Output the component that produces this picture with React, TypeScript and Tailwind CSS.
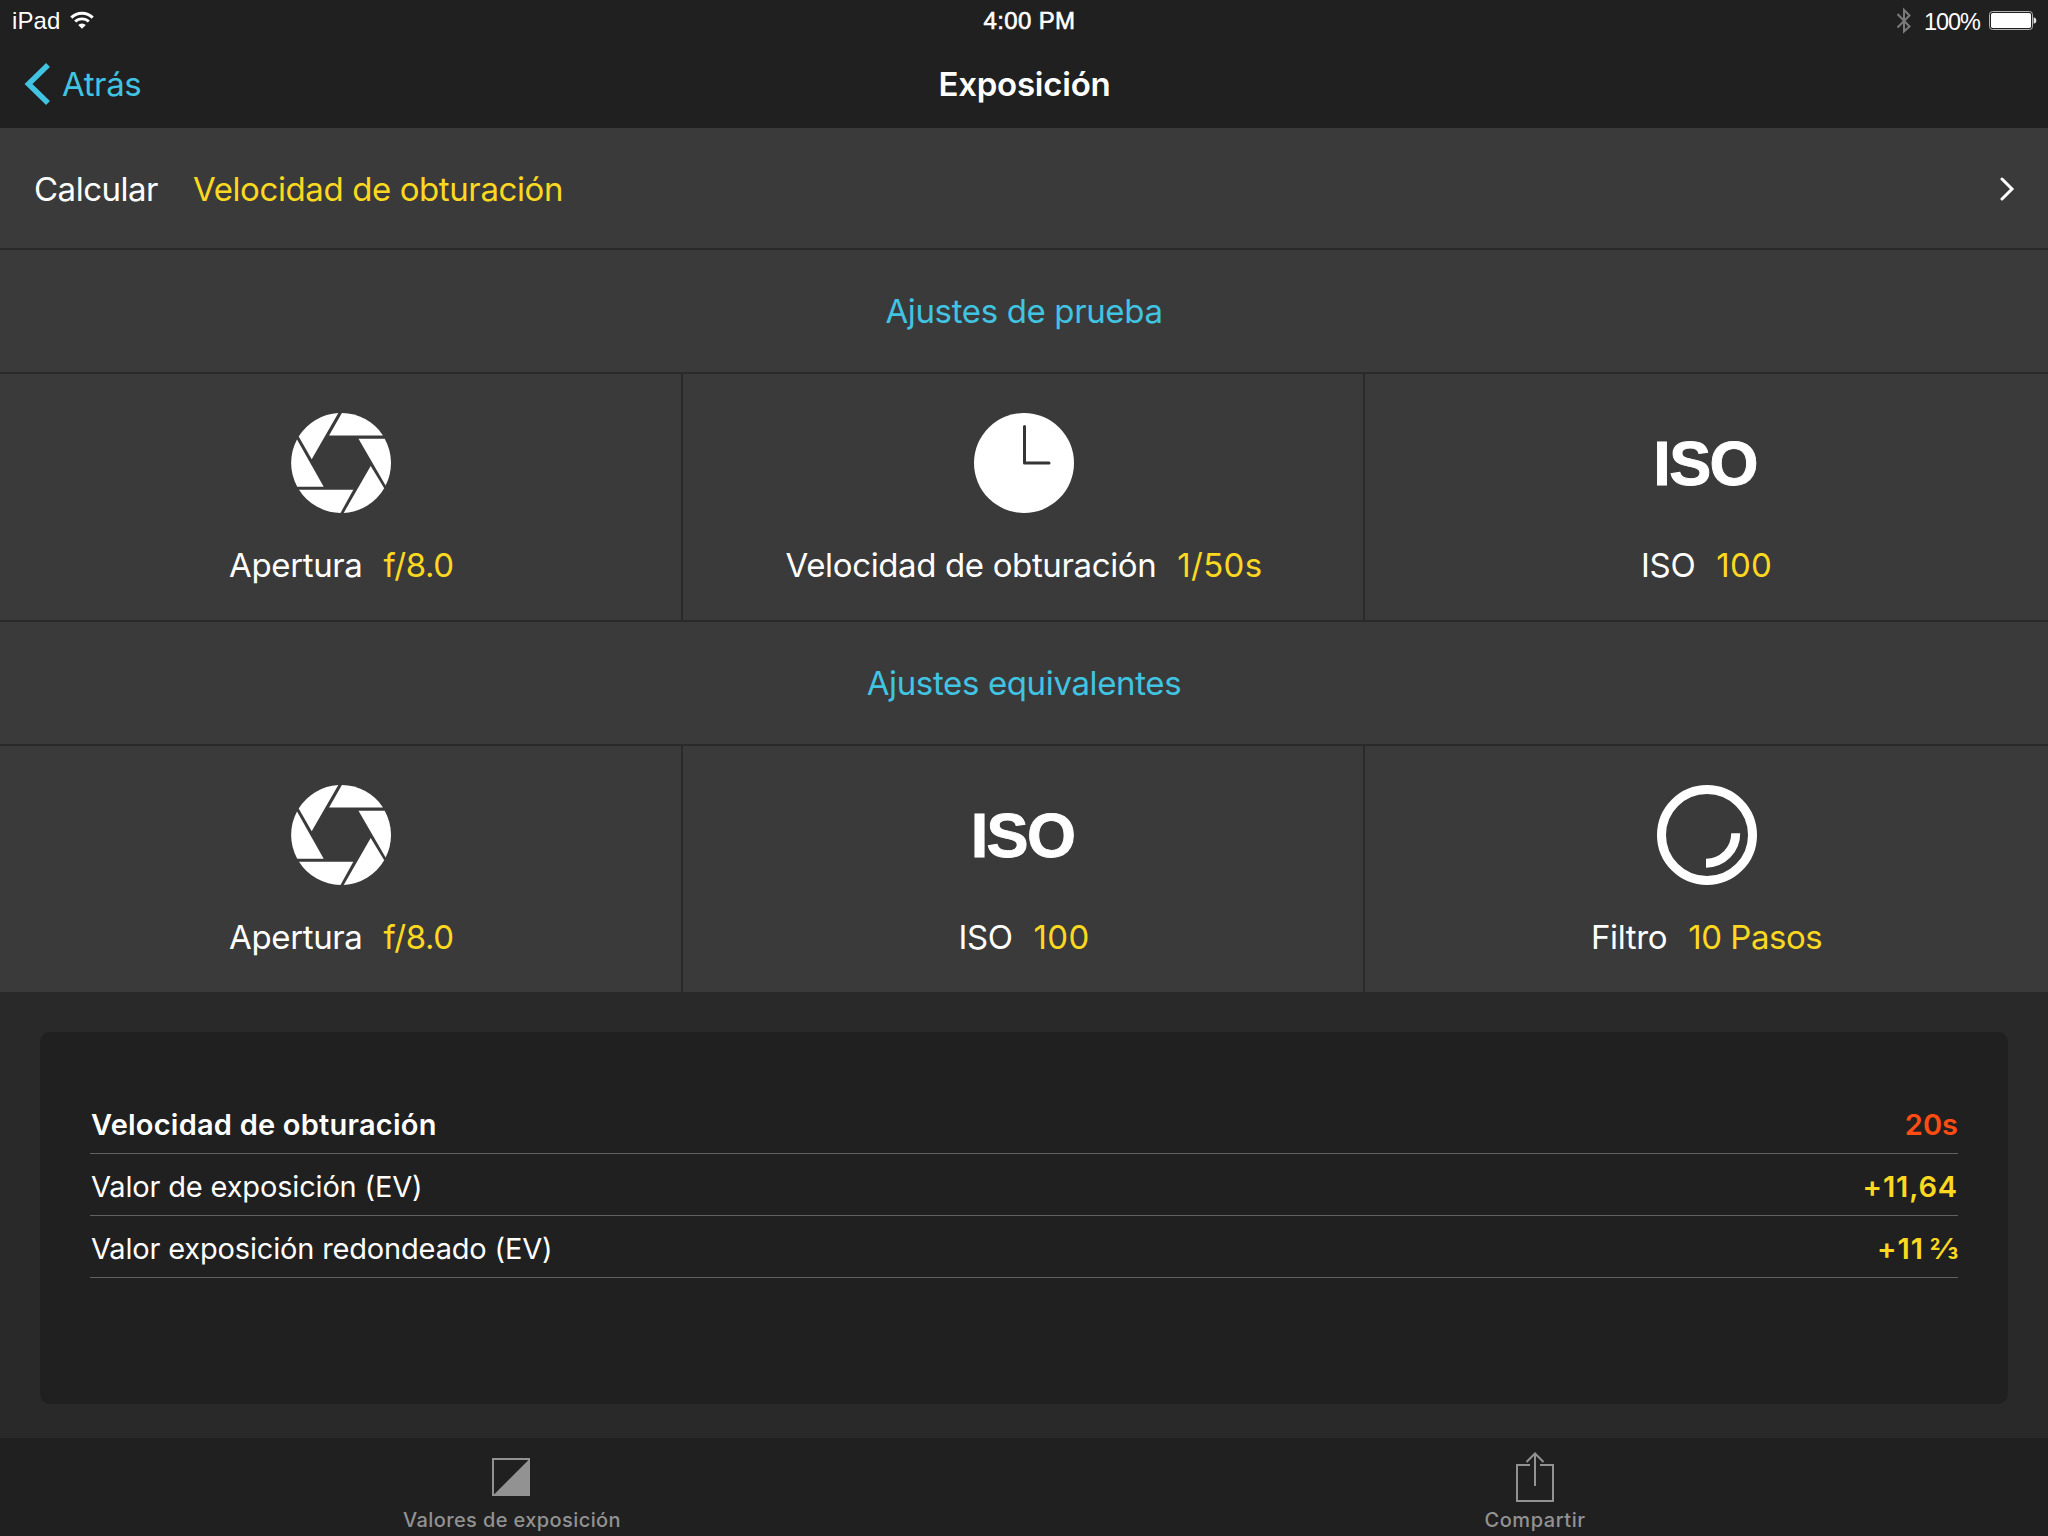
import type { ReactNode } from "react";

function WifiIcon() {
  return (
    <svg width="24" height="18" viewBox="0 0 24 18" fill="none">
      <path d="M1.3 6.6a15.2 15.2 0 0 1 21.4 0" stroke="#fff" strokeWidth="3" />
      <path d="M5.2 10.6a9.7 9.7 0 0 1 13.6 0" stroke="#fff" strokeWidth="2.8" />
      <path d="M12 17.8 8.2 14a5.4 5.4 0 0 1 7.6 0z" fill="#fff" />
    </svg>
  );
}

function BluetoothIcon() {
  return (
    <svg width="16" height="28" viewBox="0 0 16 28" fill="none">
      <path
        d="M1.5 7 13.5 19.5 8 24.5V3L13.5 8.5 1.5 20.5"
        stroke="#7b7b7b"
        strokeWidth="2"
      />
    </svg>
  );
}

function BatteryIcon() {
  return (
    <svg width="48" height="20" viewBox="0 0 48 20" fill="none">
      <rect x="0.5" y="0.5" width="43" height="18" rx="3" stroke="#b4b4b4" />
      <rect x="2" y="2" width="40" height="15" rx="1.8" fill="#fff" />
      <path d="M44.6 6.2c1.9.4 2.7 1.6 2.7 3.3s-.8 2.9-2.7 3.3z" fill="#e4e4e4" />
    </svg>
  );
}

function ApertureIcon() {
  return (
    <svg width="100" height="100" viewBox="0 0 100 100" fill="#fff">
      <path d="M50.9 0A50 50 0 0 1 92 22.4H38.1z" />
      <path d="M67.5 25.7H93.7A50 50 0 0 1 94.6 72.5z" />
      <path d="M79.7 53 93.2 75.2A50 50 0 0 1 52.7 99.9z" />
      <path d="M8 76.7H62.3L49.5 100A50 50 0 0 1 8 76.7z" />
      <path d="M6 26.4 32.7 73.7H6.2A50 50 0 0 1 6 26.4z" />
      <path d="M47.3 0 20.7 46.3 7.7 23.5A50 50 0 0 1 47.3 0z" />
    </svg>
  );
}

function ClockIcon() {
  return (
    <svg width="100" height="100" viewBox="0 0 100 100" fill="none">
      <circle cx="50" cy="50" r="50" fill="#fff" />
      <path d="M50.5 13.5V50H75" stroke="#353535" strokeWidth="3" strokeLinecap="round" strokeLinejoin="round" />
    </svg>
  );
}

function FilterIcon() {
  return (
    <svg width="100" height="100" viewBox="0 0 100 100" fill="none" stroke="#fff" strokeWidth="9">
      <circle cx="50" cy="50" r="45.5" />
      <path d="M78.7 48.3A29.7 29.7 0 0 1 49 78.2" />
    </svg>
  );
}

function IsoIcon() {
  return (
    <span className="flex h-[100px] items-center pr-[3px] font-['Liberation_Sans',Arial,sans-serif] text-[63px] leading-none font-bold tracking-[-1.6px] [-webkit-text-stroke:0.9px_white]">
      ISO
    </span>
  );
}

function ContrastIcon() {
  return (
    <svg width="40" height="56" viewBox="0 0 40 56" fill="none">
      <rect x="1" y="11" width="36" height="36" stroke="#929292" strokeWidth="2" />
      <path d="M37.5 11V47.5H1z" fill="#929292" />
    </svg>
  );
}

function ShareIcon() {
  return (
    <svg width="40" height="56" viewBox="0 0 40 56" fill="none" stroke="#929292" strokeWidth="2">
      <path d="M14 17H1V53H37V17H24" />
      <path d="M19 5.5V38M10.5 14 19 5.5 27.5 14" />
    </svg>
  );
}

function SectionTitle({ children }: { children: ReactNode }) {
  return (
    <h2 className="flex h-[124px] items-center justify-center border-b-2 border-[#2a2a2a] pt-0.5 text-[33px] tracking-[-0.36px] text-[#41c4e2]">
      {children}
    </h2>
  );
}

type CellProps = {
  icon: ReactNode;
  label: string;
  value: string;
  valueClass?: string;
  last?: boolean;
};

function Cell({ icon, label, value, valueClass = "tracking-[-0.45px]", last }: CellProps) {
  return (
    <div
      className={
        last
          ? "flex flex-col items-center gap-8 pt-[39px]"
          : "flex flex-col items-center gap-8 pt-[39px] shadow-[inset_-2px_0_0_#2a2a2a]"
      }
    >
      {icon}
      <div className="flex gap-[21px] text-[33px] leading-10">
        <span className="tracking-[-0.37px]">{label}</span>
        <span className={`text-[#fcd920] ${valueClass}`}>{value}</span>
      </div>
    </div>
  );
}

function ResultRow({ label, children, strong }: { label: string; children: ReactNode; strong?: boolean }) {
  return (
    <div className="flex h-[62px] items-center justify-between border-b border-[#616161] pt-1 text-[29px]">
      <span className={strong ? "pl-px font-semibold tracking-[0.22px]" : "pl-px tracking-[-0.17px]"}>{label}</span>
      {children}
    </div>
  );
}

export default function App() {
  return (
    <div className="flex h-[1536px] w-[2048px] flex-col overflow-hidden bg-[#292929] font-['Inter',sans-serif] text-white">
      <header className="h-32 bg-[#202020]">
        <div className="grid h-10 grid-cols-3 items-start font-['Liberation_Sans',Arial,sans-serif] text-[24px] leading-10">
          <div className="flex h-10 items-center gap-[10px] pt-px pl-3">
            <span className="tracking-[0.1px]">iPad</span>
            <span className="pb-0.5">
              <WifiIcon />
            </span>
          </div>
          <div className="pt-px pl-[11px] text-center tracking-[0.35px] [-webkit-text-stroke:0.6px_white]">4:00 PM</div>
          <div className="flex h-10 items-center justify-end pt-0.5 pr-[11px]">
            <BluetoothIcon />
            <span className="ml-3 pt-px text-[23.5px] tracking-[-1px]">100%</span>
            <span className="ml-[9px]">
              <BatteryIcon />
            </span>
          </div>
        </div>
        <div className="grid h-[88px] grid-cols-3 items-center pt-0.5 text-[33px]">
          <div className="flex items-center gap-[11px] pl-[23px] text-[#41c4e2]">
            <svg width="28" height="44" viewBox="0 0 28 44" fill="none">
              <path d="M25 2 5.5 21 25 40" stroke="currentColor" strokeWidth="5.5" />
            </svg>
            <span className="tracking-[-0.4px]">Atrás</span>
          </div>
          <h1 className="pl-px text-center font-semibold tracking-[-0.22px]">Exposición</h1>
        </div>
      </header>

      <main className="flex flex-1 flex-col">
        <div className="bg-[#3a3a3a]">
          <div className="flex h-[122px] items-center gap-[35px] border-b-2 border-[#2a2a2a] pt-[3px] pr-[33px] pl-[34px] text-[33px]">
            <span className="tracking-[-0.5px]">Calcular</span>
            <span className="tracking-[-0.4px] text-[#fcd920]">Velocidad de obturación</span>
            <svg className="ml-auto" width="16" height="26" viewBox="0 0 16 26" fill="none">
              <path d="M3 2 13 12 3 22" stroke="#fff" strokeWidth="3" strokeLinecap="round" />
            </svg>
          </div>

          <SectionTitle>Ajustes de prueba</SectionTitle>
          <div className="grid h-[248px] grid-cols-3 border-b-2 border-[#2a2a2a]">
            <Cell icon={<ApertureIcon />} label="Apertura" value="f/8.0" />
            <Cell icon={<ClockIcon />} label="Velocidad de obturación" value="1/50s" valueClass="tracking-[0.3px]" />
            <Cell icon={<IsoIcon />} label="ISO" value="100" valueClass="tracking-[0.3px]" last />
          </div>

          <SectionTitle>Ajustes equivalentes</SectionTitle>
          <div className="grid h-[246px] grid-cols-3">
            <Cell icon={<ApertureIcon />} label="Apertura" value="f/8.0" />
            <Cell icon={<IsoIcon />} label="ISO" value="100" valueClass="tracking-[0.3px]" />
            <Cell icon={<FilterIcon />} label="Filtro" value="10 Pasos" last />
          </div>
        </div>

        <section className="mx-10 mt-10 h-[372px] rounded-[10px] bg-[#202020] px-[50px] pt-[60px]">
          <ResultRow label="Velocidad de obturación" strong>
            <span className="font-semibold text-[#ff4c12]">20s</span>
          </ResultRow>
          <ResultRow label="Valor de exposición (EV)">
            <span className="font-semibold tracking-[0.85px] text-[#fcd920]">+11,64</span>
          </ResultRow>
          <ResultRow label="Valor exposición redondeado (EV)">
            <span className="font-semibold tracking-[0.9px] text-[#fcd920]">
              +11<span className="ml-1.5 tracking-[-0.5px]">⅔</span>
            </span>
          </ResultRow>
        </section>
      </main>

      <footer className="grid h-[98px] grid-cols-2 bg-[#202020] pt-[10px] text-[20px] leading-6 font-medium text-[#929292]">
        <div className="flex flex-col items-center gap-1">
          <ContrastIcon />
          <span className="tracking-[0.4px]">Valores de exposición</span>
        </div>
        <div className="flex flex-col items-center gap-1">
          <ShareIcon />
          <span className="pr-0.5 tracking-[0.55px]">Compartir</span>
        </div>
      </footer>
    </div>
  );
}
